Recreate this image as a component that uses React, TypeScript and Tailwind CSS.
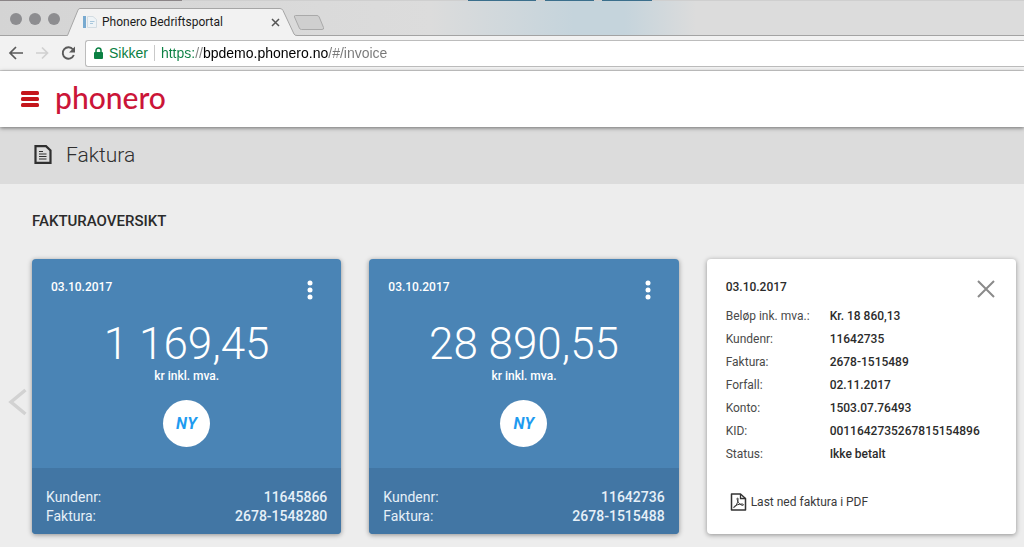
import { useState } from 'react';

type Invoice = {
    date: string;
    amount: string;
    customer: string;
    number: string;
};

const invoices: Invoice[] = [
    { date: '03.10.2017', amount: '1 169,45', customer: '11645866', number: '2678-1548280' },
    { date: '03.10.2017', amount: '28 890,55', customer: '11642736', number: '2678-1515488' },
];

const details = [
    { label: 'Beløp ink. mva.:', value: 'Kr. 18 860,13' },
    { label: 'Kundenr:', value: '11642735' },
    { label: 'Faktura:', value: '2678-1515489' },
    { label: 'Forfall:', value: '02.11.2017' },
    { label: 'Konto:', value: '1503.07.76493' },
    { label: 'KID:', value: '0011642735267815154896' },
    { label: 'Status:', value: 'Ikke betalt' },
];

function TabStrip() {
    return (
        <div className="relative flex h-9 items-end border-b border-[#a3a3a3] bg-[linear-gradient(90deg,#d4d4d4_0%,#dcdcdc_42%,#c5d4dc_56%,#c5d4dc_61%,#dcdcdc_68%,#dcdcdc_100%)]">
            {/* edge of the window lying behind this one */}
            <svg className="absolute top-0 left-0 h-px w-full" aria-hidden="true">
                <rect width="100%" height="1" fill="#cfcfcf" />
                <rect width="182" height="1" fill="#8b8587" />
                <rect x="468" width="68" height="1" fill="#3b6f8c" />
                <rect x="545" width="49" height="1" fill="#3b6f8c" />
                <rect x="602" width="50" height="1" fill="#3b6f8c" />
            </svg>
            <div className="flex h-full items-center gap-[7px] pl-2.5 pt-0.5">
                <span className="size-3 rounded-full bg-[#8d8d90]" />
                <span className="size-3 rounded-full bg-[#8d8d90]" />
                <span className="size-3 rounded-full bg-[#8d8d90]" />
            </div>
            <div className="relative -mb-px ml-1.5 flex h-7 w-[231px] items-center pr-[17px] pl-4">
                <svg className="absolute inset-0 size-full" viewBox="0 0 231 28" fill="none" aria-hidden="true">
                    <path d="M0 27.5H1.5L12 2Q12.6 .5 14 .5H214Q216 .5 217 2.5L228 26Q228.7 27.5 231 27.5V28H0Z" fill="#f2f2f2" />
                    <path d="M0 27.5H1.5L12 2Q12.6 .5 14 .5H214Q216 .5 217 2.5L228 26Q228.7 27.5 231 27.5" stroke="#a6a6a6" />
                </svg>
                <svg className="relative h-3.5 w-4" viewBox="0 0 16 14" aria-hidden="true">
                    <rect x="1" y="1" width="3" height="12" fill="#78aad0" />
                    <path d="M5.5 1.5H11L14.5 4.5V12.5H5.5Z" fill="#eef3f6" stroke="#d3dce2" />
                    <path d="M8 6.5H12.5M8 8.5H11" stroke="#a9c7dc" />
                </svg>
                <span className="relative ml-1 flex-1 font-['Roboto',sans-serif] text-xs whitespace-nowrap text-[#1c1c1c]">
                    Phonero Bedriftsportal
                </span>
                <button aria-label="Lukk fane" className="relative">
                    <svg width="9" height="9" viewBox="0 0 9 9" stroke="#555" strokeWidth="1.5" aria-hidden="true">
                        <path d="M1 1L8 8M8 1L1 8" />
                    </svg>
                </button>
            </div>
            <button aria-label="Ny fane" className="mb-1 -ml-1">
                <svg width="32" height="16" viewBox="0 0 32 16" aria-hidden="true">
                    <path d="M2.5 .5H24Q25.5 .5 26.2 2L30.5 12.5Q31.2 14.5 29 14.5H8.5Q7 14.5 6.3 13L1.5 2Q1 .5 2.5 .5Z" fill="#cfcfcf" stroke="#a9a9a9" />
                </svg>
            </button>
        </div>
    );
}

function Toolbar() {
    const [url, setUrl] = useState('https://bpdemo.phonero.no/#/invoice');

    return (
        <div className="flex h-[35px] items-center border-b border-[#d2d2d2] bg-[#f2f2f2] pl-2">
            <button aria-label="Tilbake">
                <svg width="16" height="16" viewBox="0 0 16 16" fill="none" stroke="#5a5a5a" strokeWidth="1.7" aria-hidden="true">
                    <path d="M15 8H2.5M8 2L2 8L8 14" />
                </svg>
            </button>
            <button aria-label="Frem" className="ml-2.5">
                <svg width="16" height="16" viewBox="0 0 16 16" fill="none" stroke="#d0d0d0" strokeWidth="1.7" aria-hidden="true">
                    <path d="M2 8H13.5M8 2.5L13.5 8L8 13.5" />
                </svg>
            </button>
            <button aria-label="Last inn på nytt" className="ml-2.5">
                <svg width="17" height="16" viewBox="0 0 17 16" fill="none" aria-hidden="true">
                    <path d="M13.8 10A5.7 5.7 0 1 1 13 4.5" stroke="#5a5a5a" strokeWidth="1.9" />
                    <path d="M15 1.5V7.5H9Z" fill="#5a5a5a" />
                </svg>
            </button>
            <div className="ml-2 flex h-[27px] flex-1 items-center rounded-l-[3px] border border-r-0 border-[#bcbcbc] bg-white pl-2 font-['Liberation_Sans',sans-serif] text-sm">
                <svg width="9" height="12" viewBox="0 0 9 12" aria-hidden="true">
                    <rect y="5" width="9" height="7" rx="1" fill="#0b8043" />
                    <path d="M2 5.5V3.5A2.5 2.5 0 0 1 7 3.5V5.5" fill="none" stroke="#0b8043" strokeWidth="1.5" />
                </svg>
                <span className="ml-1.5 text-[#0b8043]">Sikker</span>
                <span className="mx-1.5 h-4 w-px bg-[#c9c9c9]" />
                <input
                    aria-label="Adresse"
                    value={url}
                    onChange={(e) => setUrl(e.target.value)}
                    className="min-w-0 flex-1 bg-[linear-gradient(90deg,#0b8043_34px,#808080_34px,#808080_42px,#000_42px,#000_167px,#777_167px)] bg-clip-text text-transparent outline-none"
                />
            </div>
        </div>
    );
}

function InvoiceCard({ invoice }: { invoice: Invoice }) {
    return (
        <article className="flex flex-col overflow-hidden rounded bg-[#4a84b5] text-white shadow-[0_1px_5px_rgba(0,0,0,0.4)]">
            <div className="flex items-start justify-between pt-5 pr-7 pl-[19px]">
                <h3 className="text-xs leading-4 font-medium">{invoice.date}</h3>
                <button aria-label="Flere valg" className="pt-px">
                    <svg width="6" height="20" viewBox="0 0 6 20" fill="currentColor" aria-hidden="true">
                        <circle cx="3" cy="3" r="2.5" />
                        <circle cx="3" cy="10" r="2.5" />
                        <circle cx="3" cy="17" r="2.5" />
                    </svg>
                </button>
            </div>
            <div className="flex flex-1 flex-col items-center">
                <p className="mt-5 text-[44px] leading-[48px] font-light">{invoice.amount}</p>
                <p className="text-xs leading-4 font-medium">kr inkl. mva.</p>
                <span className="mt-4 flex size-[47px] items-center justify-center rounded-full bg-white text-base font-bold tracking-wide text-[#1e9bf0] italic">
                    NY
                </span>
            </div>
            <dl className="grid grid-cols-2 bg-[#4276a4] px-3.5 pt-5 pb-2 text-sm leading-[19px] text-[#e6f0f8]">
                <dt>Kundenr:</dt>
                <dd className="text-right font-medium">{invoice.customer}</dd>
                <dt>Faktura:</dt>
                <dd className="text-right font-medium">{invoice.number}</dd>
            </dl>
        </article>
    );
}

function DetailCard() {
    return (
        <article className="rounded bg-white pt-5 pr-5 pl-[19px] text-xs text-[#2b2b2b] shadow-[0_1px_5px_rgba(0,0,0,0.4)]">
            <div className="flex items-start justify-between">
                <h3 className="leading-4 font-medium">03.10.2017</h3>
                <button aria-label="Lukk">
                    <svg width="20" height="20" viewBox="0 0 20 20" stroke="#8a8a8a" strokeWidth="2" aria-hidden="true">
                        <path d="M2 2L18 18M18 2L2 18" />
                    </svg>
                </button>
            </div>
            <dl className="mt-1.5 grid grid-cols-[104px_1fr] leading-[23px]">
                {details.map((row) => (
                    <div key={row.label} className="contents">
                        <dt className="text-[#4a4a4a]">{row.label}</dt>
                        <dd className="font-medium">{row.value}</dd>
                    </div>
                ))}
            </dl>
            <a href="#pdf" className="mt-[26px] ml-1 inline-flex items-center gap-1 leading-5 text-[#3a3a3a]">
                <svg width="17" height="18" viewBox="0 0 17 18" fill="none" stroke="#333" aria-hidden="true">
                    <path d="M1.5 1H10.5L15.5 5.5V17H1.5Z" strokeWidth="1.5" strokeLinejoin="round" />
                    <path d="M10.5 1V5.5H15.5" strokeWidth="1.3" />
                    <path d="M4 14.5C5.5 14 8.5 9 8 5.5C7.8 4.5 6.8 5 7.2 6.5C7.8 9.5 10.5 12.5 13 12.3C14 12 13.5 11 12 11C9 11 5.5 12.2 4.2 13.5C3.5 14.3 3.5 14.8 4 14.5Z" />
                </svg>
                Last ned faktura i PDF
            </a>
        </article>
    );
}

export default function App() {
    return (
        <div className="flex min-h-screen flex-col bg-[#ededed] font-['Roboto',sans-serif]">
            <TabStrip />
            <Toolbar />
            <header className="relative flex h-14 items-center bg-white pl-[21px] shadow-[0_1px_4px_rgba(0,0,0,0.5)]">
                <button aria-label="Meny">
                    <svg width="18" height="16" viewBox="0 0 18 16" fill="#c4161c" aria-hidden="true">
                        <rect y="0" width="18" height="4" rx="1.5" />
                        <rect y="6" width="18" height="4" rx="1.5" />
                        <rect y="12" width="18" height="4" rx="1.5" />
                    </svg>
                </button>
                <a href="#/" className="ml-4 pb-1 font-[Lato,sans-serif] text-[30px] leading-9 font-medium text-[#cb1538]">
                    phonero
                </a>
            </header>
            <div className="flex h-[57px] items-center bg-[#dcdcdc] pb-0.5 pl-[34px]">
                <svg width="18" height="19" viewBox="0 0 18 19" fill="none" stroke="#2f2f2f" aria-hidden="true">
                    <path d="M1.5 1.2H12L16.5 5.5V17.8H1.5Z" strokeWidth="2.2" />
                    <path d="M5 6.5H9M5 9H12.5M5 11.5H12.5M5 14H12.5" strokeWidth="1.2" />
                </svg>
                <h1 className="ml-3.5 text-[21px] leading-7 font-light text-[#2f2f2f]">Faktura</h1>
            </div>
            <main className="pt-[25px] pb-3">
                <h2 className="pl-8 text-[15px] leading-6 font-medium text-[#2b2b2b]">FAKTURAOVERSIKT</h2>
                <div className="mt-[26px] flex pr-2">
                    <button aria-label="Forrige" className="flex w-8 shrink-0 items-center pt-2.5 pl-2">
                        <svg width="19" height="28" viewBox="0 0 19 28" fill="none" stroke="#d2d2d2" strokeWidth="3.5" aria-hidden="true">
                            <path d="M17.5 2L3 14L17.5 26" />
                        </svg>
                    </button>
                    <div className="grid min-h-[275px] flex-1 grid-cols-3 gap-7">
                        {invoices.map((invoice) => (
                            <InvoiceCard key={invoice.number} invoice={invoice} />
                        ))}
                        <DetailCard />
                    </div>
                </div>
            </main>
        </div>
    );
}
